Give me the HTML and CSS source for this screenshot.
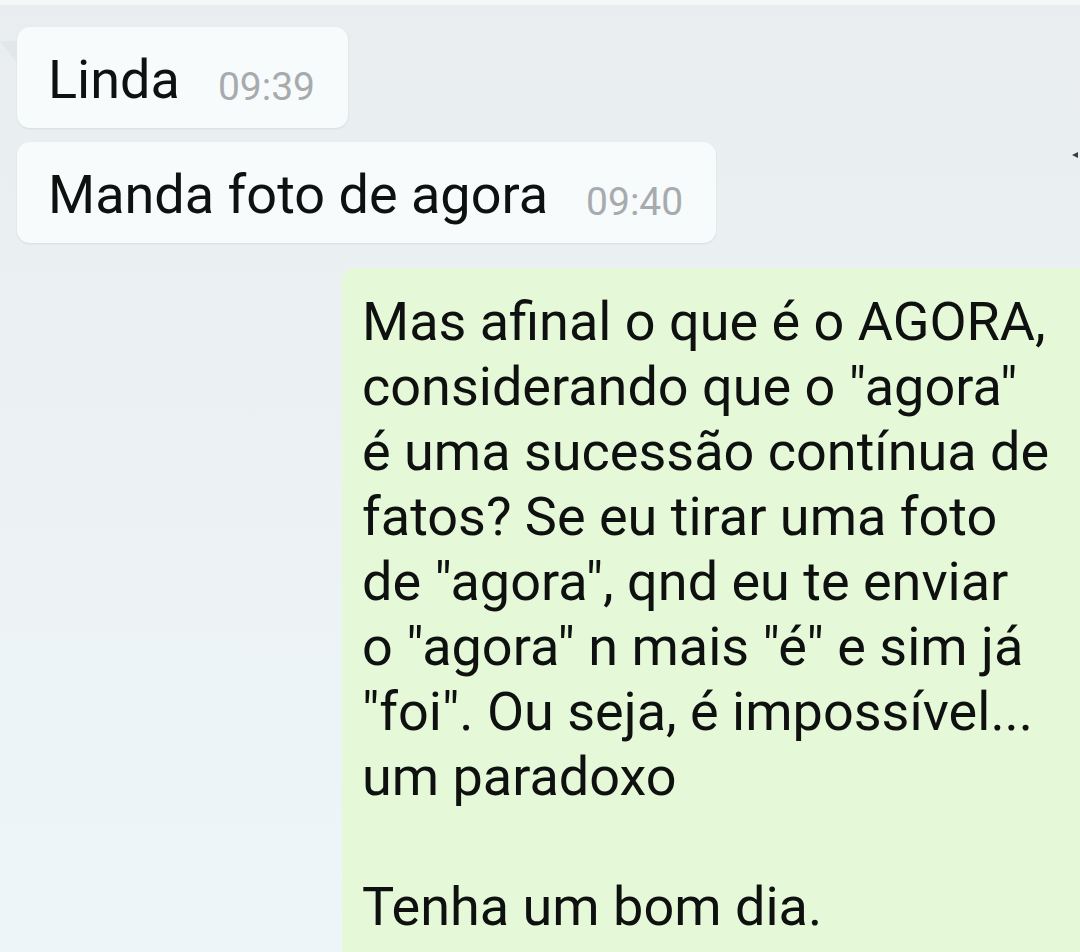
FILE: index.html
```html
<!DOCTYPE html>
<html lang="pt">
<head>
<meta charset="utf-8">
<title>Chat</title>
<link rel="stylesheet" href="styles.css">
</head>
<body>
<div class="screen">
  <div class="chat">
    <div class="row in first">
      <span class="tail"></span>
      <div class="bubble in-bubble">
        <span class="text">Linda</span>
        <span class="time">09:39</span>
      </div>
    </div>
    <div class="row in">
      <div class="bubble in-bubble">
        <span class="text">Manda foto de agora</span>
        <span class="time">09:40</span>
      </div>
      <span class="mark"></span>
    </div>
    <div class="row out">
      <div class="bubble out-bubble">
        <p class="long">Mas afinal o que é o AGORA,<br>considerando que o "agora"<br>é uma sucessão contínua de<br>fatos? Se eu tirar uma foto<br>de "agora", qnd eu te enviar<br>o "agora" n mais "é" e sim já<br>"foi". Ou seja, é impossível...<br>um paradoxo<br><br>Tenha um bom dia.</p>
      </div>
    </div>
  </div>
</div>
</body>
</html>
```

FILE: styles.css
```css
html, body {
  margin: 0;
  padding: 0;
  height: 100%;
}
body {
  background: #eaeff0;
  font-family: Roboto, "Noto Sans", "Liberation Sans", sans-serif;
  color: #0f1010;
  overflow: hidden;
}
.screen {
  border-top: 5px solid #f6f8f8;
  height: 100%;
  box-sizing: border-box;
  background: linear-gradient(180deg, #e9edef 0%, #ecf2f4 50%, #edf5f8 100%);
}
.chat {
  display: flex;
  flex-direction: column;
  padding-top: 22px;
}
.row {
  display: flex;
  align-items: flex-start;
  position: relative;
}
.row.in {
  padding-left: 17px;
  margin-bottom: 14px;
}
.row.in + .row.in {
  margin-bottom: 25px;
}
.bubble {
  border-radius: 13px;
}
.in-bubble {
  display: flex;
  align-items: baseline;
  background: #f7fbfc;
  padding: 23px 33px 18px 31px;
  box-shadow: 0 1px 2px rgba(120, 140, 150, 0.18);
}
.text {
  font-size: 54px;
  line-height: 60px;
}
.time {
  font-size: 39px;
  line-height: 40px;
  color: #a7abad;
  margin-left: 38px;
  position: relative;
  top: 2px;
}
.tail {
  position: absolute;
  left: 0;
  top: 14px;
  width: 0;
  height: 0;
  border-top: 22px solid #e2e7e9;
  border-left: 17px solid transparent;
}
.mark {
  position: absolute;
  right: 2px;
  top: 10px;
  width: 0;
  height: 0;
  border-top: 3px solid transparent;
  border-bottom: 3px solid transparent;
  border-right: 6px solid #3a3c3d;
}
.row.out {
  padding-left: 342px;
}
.out-bubble {
  flex: 1;
  background: #e5f9d8;
  border-radius: 13px 0 0 0;
  padding: 21px 0 14px 20px;
}
.long {
  margin: 0;
  font-size: 54px;
  line-height: 65px;
}
```
